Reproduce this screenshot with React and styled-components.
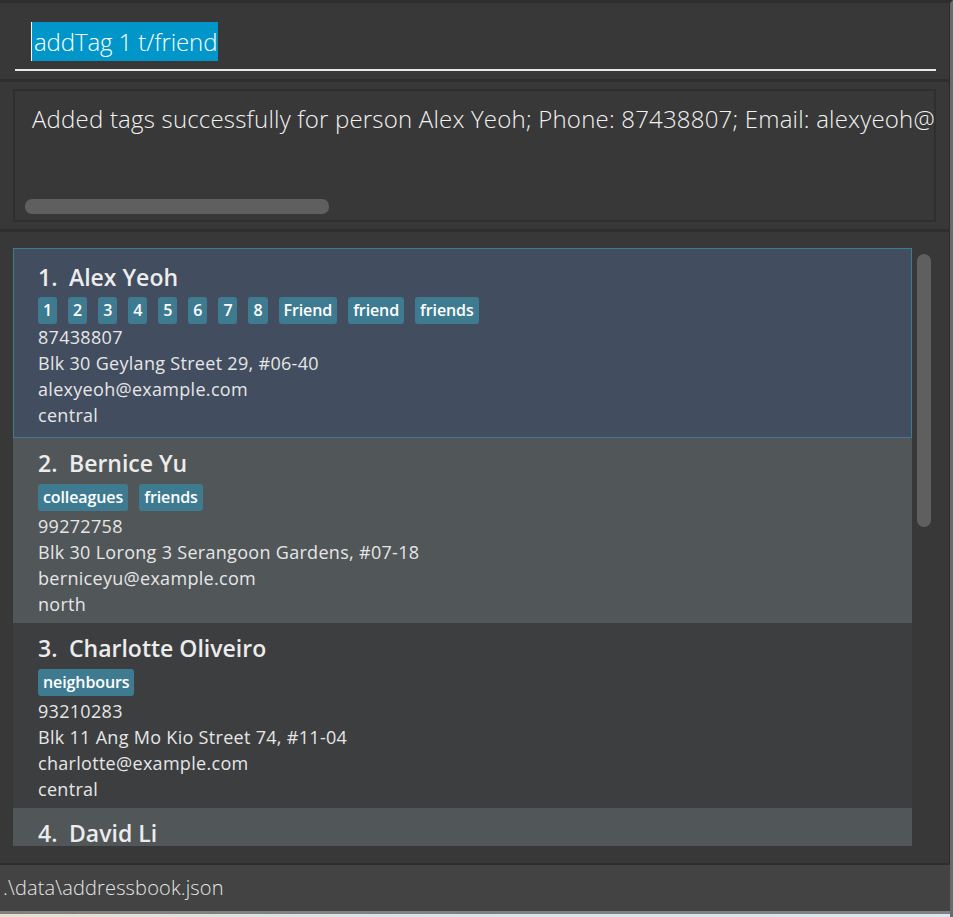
import React from "react";
import styled, { createGlobalStyle } from "styled-components";

const Global = createGlobalStyle`
  html, body { margin: 0; padding: 0; background: #383838; }
  body { font-family: "Open Sans", "Noto Sans", sans-serif; overflow: hidden; }
  * { box-sizing: border-box; }
`;

const Window = styled.div`
  width: 953px;
  height: 917px;
  display: flex;
  flex-direction: column;
  background: #383838;
  border-top: 3px solid #2e2e2e;
  border-right: 3px solid #6a6a6a;
  box-shadow: inset -1px 0 0 #2b2b2b;
`;

const CommandSection = styled.div`
  height: 76px;
  padding: 0 14px 8px 15px;
  display: flex;
  flex-direction: column;
  justify-content: flex-end;
`;

const CommandField = styled.div`
  border-bottom: 2px solid #e8e8e8;
  padding: 0 0 8px 16px;
  display: flex;
`;

const Selected = styled.span`
  background: #0096c9;
  color: #ffffff;
  font-family: "Open Sans", sans-serif;
  font-weight: 300;
  font-size: 24px;
  line-height: 39px;
  padding: 0 1px 0 2px;
  border-left: 1px solid #ffffff;
  letter-spacing: -0.1px;
`;

const Divider = styled.div`
  height: 3px;
  background: #2e2e2e;
  flex-shrink: 0;
`;

const ResultSection = styled.div`
  height: 147px;
  padding: 7px 14px 7px 13px;
  display: flex;
`;

const ResultBox = styled.div`
  flex: 1;
  border: 2px solid #2f2f2f;
  background: #383838;
  display: flex;
  flex-direction: column;
  justify-content: space-between;
  padding: 12px 0 6px 10px;
  overflow: hidden;
`;

const ResultText = styled.div`
  color: #f2f2f2;
  font-family: "Open Sans", sans-serif;
  font-weight: 300;
  font-size: 24px;
  line-height: 32px;
  white-space: nowrap;
  padding-left: 7px;
  letter-spacing: 0.2px;
`;

const HScroll = styled.div`
  width: 304px;
  height: 15px;
  border-radius: 7px;
  background: #5f5f5f;
`;

const ListSection = styled.div`
  flex: 1;
  display: flex;
  padding: 16px 0 17px 13px;
  min-height: 0;
`;

const ListViewport = styled.div`
  width: 899px;
  overflow: hidden;
  display: flex;
  flex-direction: column;
`;

const ScrollTrack = styled.div`
  width: 38px;
  padding: 6px 19px 0 5px;
`;

const VScroll = styled.div`
  width: 14px;
  height: 273px;
  border-radius: 7px;
  background: #5f5f5f;
`;

const Card = styled.div`
  flex-shrink: 0;
  background: ${(p) => p.$bg};
  border: 1px solid ${(p) => (p.$selected ? "#3e7b91" : p.$bg)};
  padding: ${(p) => (p.$selected ? "13px 24px 9px" : "9px 24px 5px")};
  display: flex;
  flex-direction: column;
  color: #ececec;
`;

const NameRow = styled.div`
  display: flex;
  font-family: "Open Sans", sans-serif;
  font-weight: 600;
  font-size: 23px;
  line-height: 30px;
  color: #ececec;
`;

const Index = styled.span`
  width: 31px;
`;

const Tags = styled.div`
  display: flex;
  gap: 11px;
  margin: ${(p) => (p.$selected ? "5px 0 0" : "6px 0 2px")};
`;

const Tag = styled.span`
  background: #3e7b91;
  color: #ffffff;
  border-radius: 3px;
  font-family: "Open Sans", sans-serif;
  font-weight: 600;
  font-size: 16px;
  line-height: 27px;
  padding: 0 5px;
  letter-spacing: -0.1px;
`;

const Detail = styled.div`
  font-family: "Open Sans", sans-serif;
  font-weight: 400;
  font-size: 18px;
  line-height: 26px;
  color: #e6e6e6;
  letter-spacing: 0.3px;
`;

const StatusBar = styled.div`
  height: 51px;
  background: #434343;
  border-top: 2px solid #2e2e2e;
  border-bottom: 3px solid #808080;
  padding: 9px 0 0 3px;
  color: #e6e6e6;
  font-family: "Open Sans", sans-serif;
  font-weight: 300;
  font-size: 20px;
  line-height: 28px;
  letter-spacing: 0.15px;
  flex-shrink: 0;
`;

const Desktop = styled.div`
  height: 3px;
  background: linear-gradient(90deg, #e8e0cc 0%, #d6e4ea 40%, #d8e8f0 100%);
  flex-shrink: 0;
`;

const persons = [
  {
    name: "Alex Yeoh",
    tags: ["1", "2", "3", "4", "5", "6", "7", "8", "Friend", "friend", "friends"],
    phone: "87438807",
    address: "Blk 30 Geylang Street 29, #06-40",
    email: "alexyeoh@example.com",
    region: "central",
  },
  {
    name: "Bernice Yu",
    tags: ["colleagues", "friends"],
    phone: "99272758",
    address: "Blk 30 Lorong 3 Serangoon Gardens, #07-18",
    email: "berniceyu@example.com",
    region: "north",
  },
  {
    name: "Charlotte Oliveiro",
    tags: ["neighbours"],
    phone: "93210283",
    address: "Blk 11 Ang Mo Kio Street 74, #11-04",
    email: "charlotte@example.com",
    region: "central",
  },
  {
    name: "David Li",
    tags: ["family"],
    phone: "91031282",
    address: "Blk 436 Serangoon Gardens Street 26, #16-43",
    email: "lidavid@example.com",
    region: "east",
  },
];

const bgs = ["#424d5f", "#515658", "#3c3e3f", "#515658"];

export default function App() {
  return (
    <>
      <Global />
      <Window>
        <CommandSection>
          <CommandField>
            <Selected>addTag 1 t/friend</Selected>
          </CommandField>
        </CommandSection>
        <Divider />
        <ResultSection>
          <ResultBox>
            <ResultText>
              Added tags successfully for person Alex Yeoh; Phone: 87438807; Email: alexyeoh@example.com; Address: Blk 30 Geylang Street 29, #06-40
            </ResultText>
            <HScroll />
          </ResultBox>
        </ResultSection>
        <Divider />
        <ListSection>
          <ListViewport>
            {persons.map((p, i) => (
              <Card key={p.name} $bg={bgs[i]} $selected={i === 0}>
                <NameRow>
                  <Index>{i + 1}.</Index>
                  <span>{p.name}</span>
                </NameRow>
                <Tags $selected={i === 0}>
                  {p.tags.map((t) => (
                    <Tag key={t}>{t}</Tag>
                  ))}
                </Tags>
                <Detail>{p.phone}</Detail>
                <Detail>{p.address}</Detail>
                <Detail>{p.email}</Detail>
                <Detail>{p.region}</Detail>
              </Card>
            ))}
          </ListViewport>
          <ScrollTrack>
            <VScroll />
          </ScrollTrack>
        </ListSection>
        <StatusBar>.\data\addressbook.json</StatusBar>
        <Desktop />
      </Window>
    </>
  );
}
